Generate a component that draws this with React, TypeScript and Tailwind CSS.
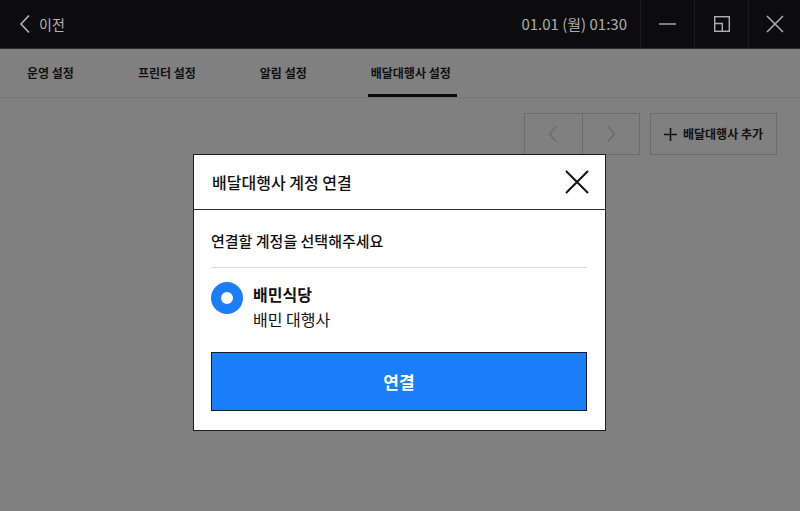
import React from "react";

const font = { fontFamily: '"Noto Sans CJK KR", "Noto Sans", sans-serif' };

function Tab({ label, active }: { label: string; active?: boolean }) {
  return (
    <div className="relative flex h-full items-center">
      <span className="text-[12px] font-bold text-[#111]">{label}</span>
      {active && <div className="absolute -left-[3px] -right-[6px] bottom-0 h-[3px] bg-[#0a0a0a]" />}
    </div>
  );
}

export default function App() {
  return (
    <div className="relative w-[800px] h-[511px] overflow-hidden bg-[#808080]" style={font}>
      {/* title bar */}
      <div className="flex h-[49px] items-stretch bg-[#0c0c0e] border-b border-[#2a2a2a]">
        <div className="flex items-center pl-[19px] gap-[8px] text-[#b4b4b4]">
          <svg width="12" height="20" viewBox="0 0 12 20" fill="none">
            <path d="M10 1.5 L2 10 L10 18.5" stroke="#b4b4b4" strokeWidth="1.6" />
          </svg>
          <span className="text-[14px]">이전</span>
        </div>
        <div className="flex-1" />
        <div className="flex items-center pr-[13px] text-[15px] text-[#acacac]">01.01 (월) 01:30</div>
        <div className="flex w-[54px] items-center justify-center border-l border-[#1c1c1e]">
          <svg width="18" height="4" viewBox="0 0 18 4">
            <path d="M0 2 H17" stroke="#b0b0b0" strokeWidth="1.4" />
          </svg>
        </div>
        <div className="flex w-[54px] items-center justify-center border-l border-[#1c1c1e]">
          <svg width="16" height="16" viewBox="0 0 16 16" fill="none">
            <rect x="0.7" y="0.7" width="14.6" height="14.6" stroke="#b0b0b0" strokeWidth="1.4" />
            <path d="M0.7 7.5 H8.3 V15.3" stroke="#b0b0b0" strokeWidth="1.4" />
          </svg>
        </div>
        <div className="flex w-[52px] items-center justify-center border-l border-[#1c1c1e]">
          <svg width="18" height="18" viewBox="0 0 18 18" fill="none">
            <path d="M1 1 L17 17 M17 1 L1 17" stroke="#b0b0b0" strokeWidth="1.5" />
          </svg>
        </div>
      </div>

      {/* tabs */}
      <div className="flex h-[49px] items-stretch gap-[64px] pl-[27px] border-b border-[#767676]">
        <Tab label="운영 설정" />
        <Tab label="프린터 설정" />
        <Tab label="알림 설정" />
        <Tab label="배달대행사 설정" active />
      </div>

      {/* toolbar */}
      <div className="flex justify-end gap-[10px] pr-[23px] pt-[15px]">
        <div className="flex h-[42px] w-[116px] border border-[#6c6c6c]">
          <div className="flex flex-1 items-center justify-center border-r border-[#6c6c6c]">
            <svg width="10" height="18" viewBox="0 0 10 18" fill="none">
              <path d="M8.5 1 L1.5 9 L8.5 17" stroke="#6a6a6a" strokeWidth="1.3" />
            </svg>
          </div>
          <div className="flex flex-1 items-center justify-center">
            <svg width="10" height="18" viewBox="0 0 10 18" fill="none">
              <path d="M1.5 1 L8.5 9 L1.5 17" stroke="#6a6a6a" strokeWidth="1.3" />
            </svg>
          </div>
        </div>
        <div className="flex h-[42px] w-[127px] items-center justify-center gap-[6px] border border-[#6c6c6c]">
          <svg width="13" height="13" viewBox="0 0 13 13" fill="none">
            <path d="M6.5 0 V13 M0 6.5 H13" stroke="#111" strokeWidth="1.6" />
          </svg>
          <span className="text-[12px] font-bold text-[#111]">배달대행사 추가</span>
        </div>
      </div>

      {/* dialog */}
      <div className="absolute left-[193px] top-[154px] w-[413px] h-[277px] bg-white border border-[#1e1e1e]">
        <div className="flex h-[55px] items-center justify-between pl-[18px] pr-[16px] border-b border-[#2a2a2a]">
          <span className="text-[16px] font-medium text-[#111]">배달대행사 계정 연결</span>
          <svg width="24" height="24" viewBox="0 0 24 24" fill="none">
            <path d="M1 1 L23 23 M23 1 L1 23" stroke="#111" strokeWidth="2" />
          </svg>
        </div>
        <div className="pl-[17px] pr-[18px]">
          <div className="flex h-[58px] items-center border-b border-[#dcdcdc] pt-[6px]">
            <span className="text-[15px] font-medium text-[#111]">연결할 계정을 선택해주세요</span>
          </div>
          <div className="flex items-start gap-[10px] pt-[14px]">
            <div className="flex h-[32px] w-[32px] items-center justify-center rounded-full bg-[#1b7ef8]">
              <div className="h-[12px] w-[12px] rounded-full bg-white" />
            </div>
            <div className="flex flex-col leading-[25px]">
              <span className="text-[16px] font-bold text-[#111]">배민식당</span>
              <span className="text-[16px] text-[#111]">배민 대행사</span>
            </div>
          </div>
          <div className="mt-[20px] flex h-[59px] items-center justify-center bg-[#1b7ef8] border border-[#1a1a2a]">
            <span className="text-[17px] font-bold text-white">연결</span>
          </div>
        </div>
      </div>
    </div>
  );
}
